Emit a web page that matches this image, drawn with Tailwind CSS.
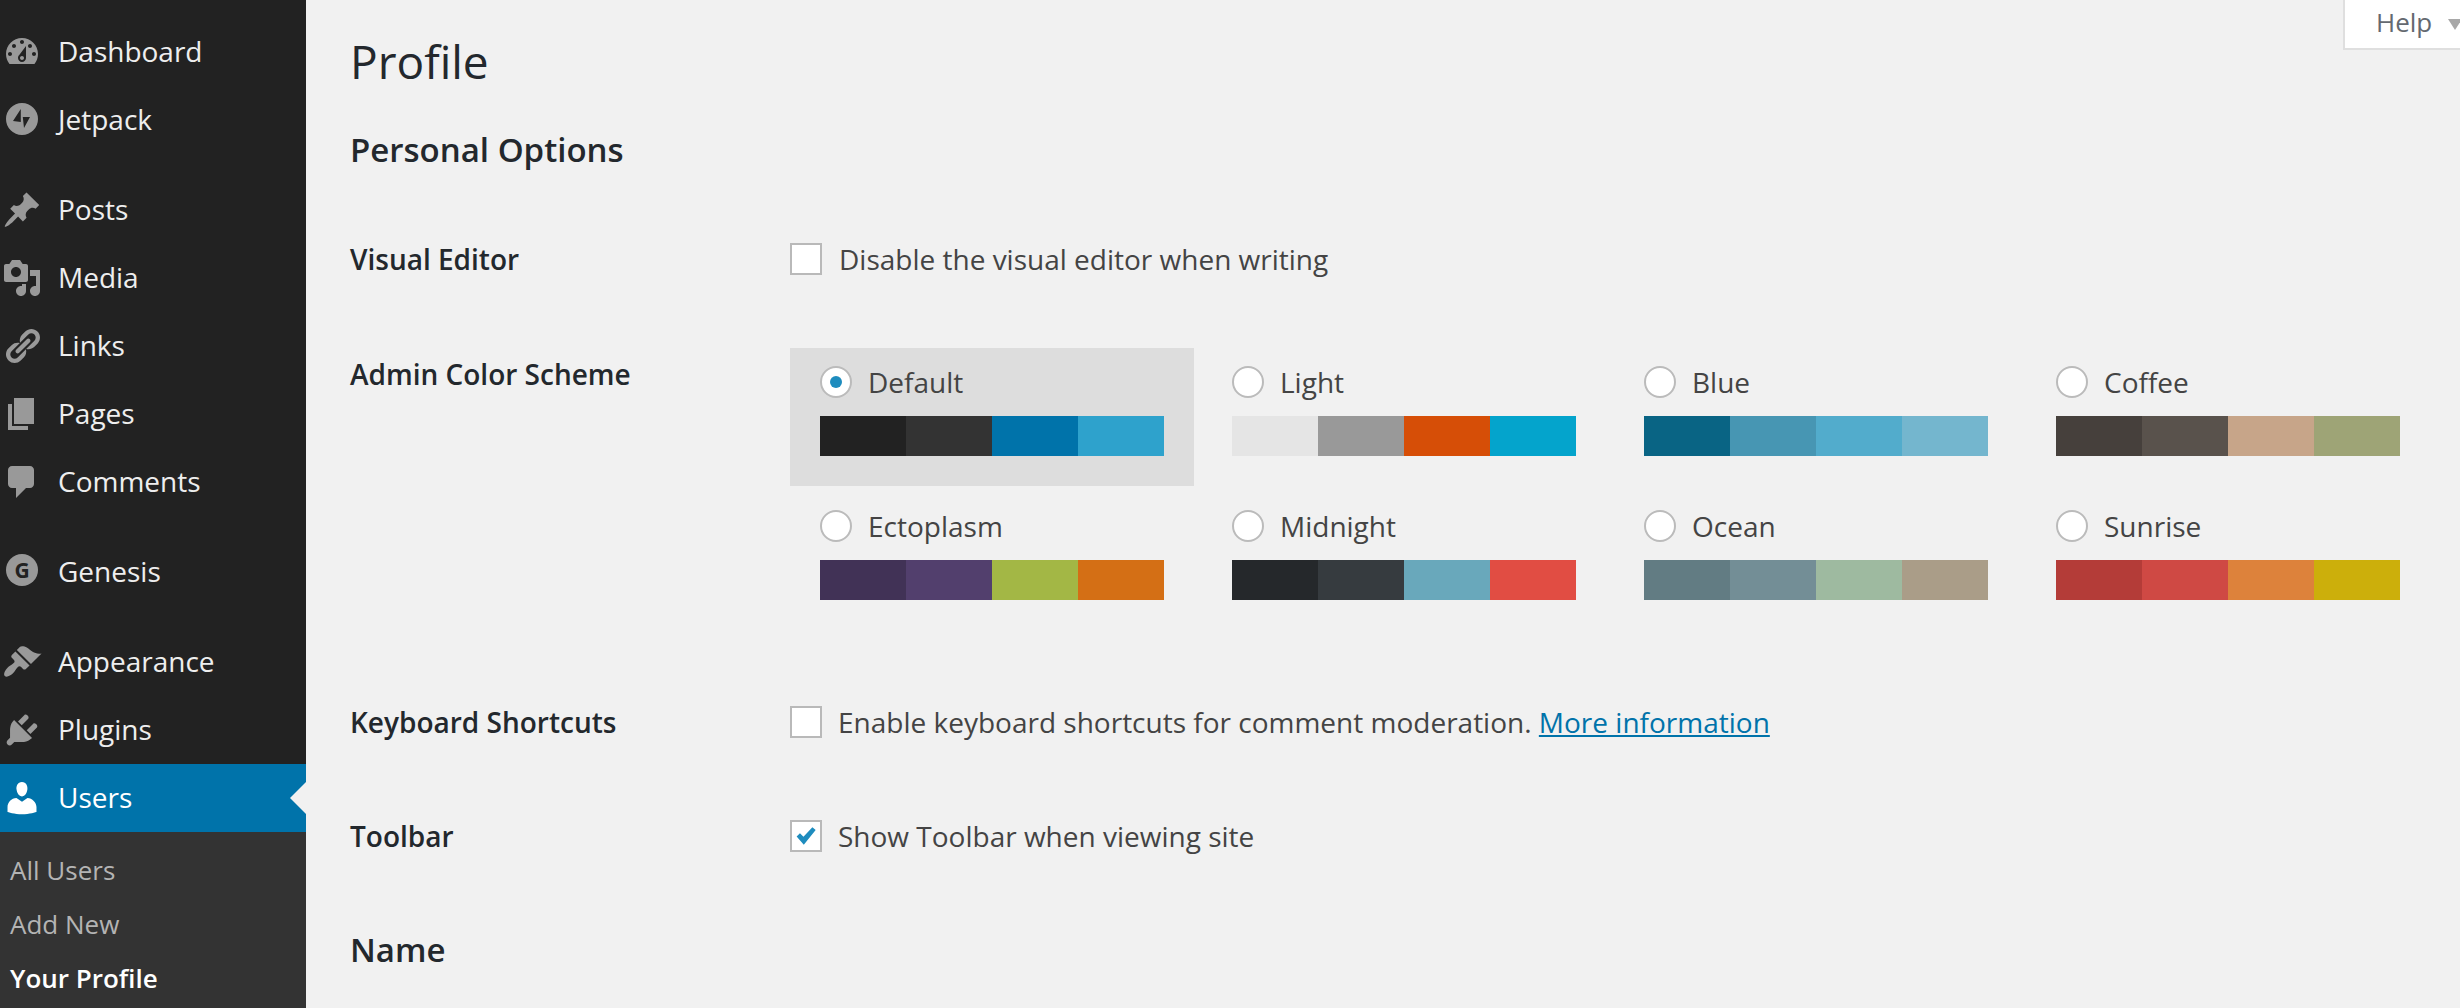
<!DOCTYPE html>
<html lang="en">
<head>
    <meta charset="UTF-8">
    <title>Profile</title>
    <script src="https://cdn.jsdelivr.net/npm/@tailwindcss/browser@4"></script>
</head>
<body class="h-[1008px] overflow-hidden bg-[#f1f1f1] font-['Open_Sans',sans-serif] text-[28px] text-[#444]">
<div class="flex h-[1008px]">
    <!-- Sidebar -->
    <nav class="w-[306px] shrink-0 bg-[#222] pt-[18px] text-[#eee]">
        <a class="flex h-[68px] items-center">
            <svg class="ml-[2px] h-10 w-10 fill-[#999]" viewBox="0 0 20 20"><path d="M3.76 16h12.48c1.1-1.37 1.76-3.11 1.76-5 0-4.42-3.58-8-8-8s-8 3.58-8 8c0 1.89.66 3.63 1.76 5zM10 4c.55 0 1 .45 1 1s-.45 1-1 1-1-.45-1-1 .45-1 1-1zM6 6c.55 0 1 .45 1 1s-.45 1-1 1-1-.45-1-1 .45-1 1-1zm8 0c.55 0 1 .45 1 1s-.45 1-1 1-1-.45-1-1 .45-1 1-1zm-5.37 5.55L12 7v6c0 1.1-.9 2-2 2s-2-.9-2-2c0-.57.24-1.08.63-1.45zM4 10c.55 0 1 .45 1 1s-.45 1-1 1-1-.45-1-1 .45-1 1-1zm12 0c.55 0 1 .45 1 1s-.45 1-1 1-1-.45-1-1 .45-1 1-1zm-5 3c0-.55-.45-1-1-1s-1 .45-1 1 .45 1 1 1 1-.45 1-1z" fill-rule="evenodd"/></svg>
            <span class="mb-[3px] ml-4">Dashboard</span>
        </a>
        <a class="flex h-[68px] items-center">
            <svg class="mb-[2px] ml-[2px] h-10 w-10 fill-[#999]" viewBox="0 0 20 20"><path fill-rule="evenodd" d="M10 2a8 8 0 1 0 0 16 8 8 0 0 0 0-16zM9.4 5L5.5 11l3.9.5zM10.4 9H14l-3 5.5z"/></svg>
            <span class="mb-[3px] ml-4">Jetpack</span>
        </a>
        <a class="mt-[22px] flex h-[68px] items-center">
            <svg class="ml-[2px] h-10 w-10 fill-[#999]" viewBox="0 0 20 20"><path d="M10.44 3.02l1.82-1.82 6.36 6.35-1.83 1.82c-1.05-.68-2.48-.57-3.41.36l-.75.75c-.92.93-1.04 2.35-.35 3.41l-1.83 1.82-2.41-2.41-2.8 2.79c-.42.42-3.38 2.71-3.8 2.29s1.86-3.39 2.28-3.81l2.79-2.79L4.1 9.36l1.83-1.82c1.05.69 2.48.57 3.4-.36l.75-.75c.93-.92 1.05-2.35.36-3.41z"/></svg>
            <span class="mb-[3px] ml-4">Posts</span>
        </a>
        <a class="flex h-[68px] items-center">
            <svg class="ml-[2px] h-10 w-10 fill-[#999]" viewBox="0 0 20 20"><path fill-rule="evenodd" d="M13 11V4c0-.55-.45-1-1-1h-1.67L9 1H5L3.67 3H2c-.55 0-1 .45-1 1v7c0 .55.45 1 1 1h10c.55 0 1-.45 1-1zM7 4.5c1.38 0 2.5 1.12 2.5 2.5S8.38 9.5 7 9.5 4.5 8.38 4.5 7 5.62 4.5 7 4.5zM14 6h5v10.5c0 1.38-1.12 2.5-2.5 2.5S14 17.88 14 16.5s1.12-2.5 2.5-2.5c.17 0 .34.02.5.05V9h-3V6zm-4 8.05V13h2v3.5c0 1.38-1.12 2.5-2.5 2.5S7 17.88 7 16.5 8.12 14 9.5 14c.17 0 .34.02.5.05z"/></svg>
            <span class="mb-[3px] ml-4">Media</span>
        </a>
        <a class="flex h-[68px] items-center">
            <svg class="ml-[2px] h-10 w-10 fill-[#999]" viewBox="0 0 20 20"><path d="M17.74 2.76c1.68 1.69 1.68 4.41 0 6.1l-1.53 1.52c-1.12 1.12-2.7 1.47-4.14 1.09l2.62-2.61.76-.77.76-.76c.84-.84.84-2.2 0-3.04-.84-.85-2.2-.85-3.04 0l-.77.76-3.38 3.38c-.37-1.44-.02-3.02 1.1-4.14l1.52-1.53c1.69-1.68 4.42-1.68 6.1 0zM8.59 13.43l5.34-5.34c.42-.42.42-1.1 0-1.52-.44-.43-1.13-.39-1.53 0l-5.33 5.34c-.42.42-.42 1.1 0 1.52.44.43 1.13.39 1.52 0zm-.76 2.29l4.14-4.15c.38 1.44.03 3.02-1.09 4.14l-1.52 1.53c-1.69 1.68-4.41 1.68-6.1 0-1.68-1.68-1.68-4.42 0-6.1l1.53-1.52c1.12-1.12 2.7-1.47 4.14-1.1l-4.14 4.15c-.85.84-.85 2.2 0 3.05.84.84 2.2.84 3.04 0z"/></svg>
            <span class="mb-[3px] ml-4">Links</span>
        </a>
        <a class="flex h-[68px] items-center">
            <svg class="ml-[2px] h-10 w-10 fill-[#999]" viewBox="0 0 20 20"><path d="M6 15V2h10v13H6zm-1 1h8v2H3V5h2v11z"/></svg>
            <span class="mb-[3px] ml-4">Pages</span>
        </a>
        <a class="flex h-[68px] items-center">
            <svg class="ml-[2px] h-10 w-10 fill-[#999]" viewBox="0 0 20 20"><path d="M5 2h9c1.1 0 2 .9 2 2v7c0 1.1-.9 2-2 2h-2l-5 5v-5H5c-1.1 0-2-.9-2-2V4c0-1.1.9-2 2-2z"/></svg>
            <span class="mb-[3px] ml-4">Comments</span>
        </a>
        <a class="mt-[22px] flex h-[68px] items-center">
            <span class="mb-[4px] ml-[6px] flex h-8 w-8 items-center justify-center rounded-full bg-[#999] text-[21px] leading-none font-bold text-[#222]">G</span>
            <span class="mb-[3px] ml-5">Genesis</span>
        </a>
        <a class="mt-[22px] flex h-[68px] items-center">
            <svg class="ml-[2px] h-10 w-10 fill-[#999]" viewBox="0 0 20 20"><path d="M14.48 11.06L7.41 3.99l1.5-1.5c.5-.56 2.3-.47 3.51.32 1.21.8 1.43 1.28 2.91 2.1 1.18.64 2.45 1.26 4.45.85zM13.77 11.77L6.7 4.7 4.93 6.47c-.39.39-.39 1.02 0 1.41l1.06 1.06c.39.39.39 1.03 0 1.42-.6.6-1.43 1.11-2.21 1.69-.35.26-.7.53-1.01.84C1.6 14.05.5 16.1 1.4 17c.9.9 2.95-.2 4.11-1.37.31-.31.58-.66.84-1.01.58-.78 1.09-1.61 1.69-2.21.39-.39 1.03-.39 1.42 0l1.06 1.06c.39.39 1.02.39 1.41 0z"/></svg>
            <span class="mb-[3px] ml-4">Appearance</span>
        </a>
        <a class="flex h-[68px] items-center">
            <svg class="ml-[2px] h-10 w-10 fill-[#999]" viewBox="0 0 20 20"><path d="M13.11 4.36L9.87 7.6 8 5.73l3.24-3.24c.35-.34 1.05-.2 1.56.32.52.51.66 1.21.31 1.55zm-8 1.77l.91-1.12 9.01 9.01-1.19.84c-.71.71-2.63 1.16-3.82 1.16H6.14L4.9 17.26c-.59.59-1.54.59-2.12 0-.59-.58-.59-1.53 0-2.12l1.24-1.24v-3.88c0-1.13.4-3.19 1.09-3.89zm7.26 3.97l3.24-3.24c.34-.35 1.04-.21 1.55.31.52.51.66 1.21.31 1.55l-3.24 3.25z"/></svg>
            <span class="mb-[3px] ml-4">Plugins</span>
        </a>
        <a class="relative flex h-[68px] items-center bg-[#0073aa] text-white">
            <svg class="ml-[2px] h-10 w-10 fill-white" viewBox="0 0 20 20"><path d="M10 9.25c-2.27 0-2.73-3.44-2.73-3.44C7 4.02 7.82 2 9.97 2c2.16 0 2.98 2.02 2.71 3.81 0 0-.41 3.44-2.68 3.44zm0 2.57L12.72 10c2.39 0 4.52 2.33 4.52 4.53v2.49s-3.65 1.13-7.24 1.13c-3.65 0-7.24-1.13-7.24-1.13v-2.49c0-2.25 1.94-4.48 4.47-4.48z"/></svg>
            <span class="mb-[3px] ml-4">Users</span>
            <span class="absolute top-[18px] right-0 h-0 w-0 border-y-[16px] border-r-[16px] border-y-transparent border-r-[#f1f1f1]"></span>
        </a>
        <div class="bg-[#333] pt-[13px] pb-4 text-[26px] text-[#b4b4b4]">
            <a class="flex h-[54px] items-center pb-[3px] pl-[10px]">All Users</a>
            <a class="flex h-[54px] items-center pb-[3px] pl-[10px]">Add New</a>
            <a class="flex h-[54px] items-center pb-[3px] pl-[10px] font-semibold text-white">Your Profile</a>
        </div>
    </nav>

    <!-- Content -->
    <main class="relative min-w-0 flex-1 pl-[44px]">
        <div class="absolute top-0 right-0 flex h-[50px] w-[117px] items-center border-b-2 border-l-2 border-[#dfdfdf] bg-white pl-[32px] text-[26px] text-[#646970]">
            <span class="mb-[3px] -ml-[1px]">Help</span>
            <span class="ml-4 h-0 w-0 border-x-[7px] border-t-[11px] border-x-transparent border-t-[#a8a8a8]"></span>
        </div>

        <h1 class="h-[88px] pt-[26px] text-[46px] leading-[70px] text-[#23282d]">Profile</h1>
        <h2 class="mt-[40px] text-[33px] leading-[44px] font-semibold text-[#23282d]">Personal Options</h2>

        <div class="mt-[71px] flex h-[32px] items-center">
            <div class="w-[440px] font-semibold text-[#23282d]">Visual Editor</div>
            <span class="h-8 w-8 border-2 border-[#b9b9b9] bg-white"></span>
            <span class="ml-[17px]">Disable the visual editor when writing</span>
        </div>

        <div class="mt-[73px] flex">
            <div class="w-[440px] shrink-0 pt-[6px] leading-[40px] font-semibold text-[#23282d]">Admin Color Scheme</div>
            <div class="grid grid-cols-[404px_404px_404px_404px] gap-x-2 gap-y-[6px]">
                <div class="h-[138px] bg-[#ddd] px-[30px] pt-[18px]">
                    <div class="flex h-8 items-center">
                        <span class="flex h-8 w-8 items-center justify-center rounded-full border-2 border-[#bbb] bg-white"><span class="h-3 w-3 rounded-full bg-[#1e8cbe]"></span></span>
                        <span class="ml-4">Default</span>
                    </div>
                    <div class="mt-[18px] flex h-10"><i class="flex-1 bg-[#222]"></i><i class="flex-1 bg-[#333]"></i><i class="flex-1 bg-[#0073aa]"></i><i class="flex-1 bg-[#2ea2cc]"></i></div>
                </div>
                <div class="h-[138px] px-[30px] pt-[18px]">
                    <div class="flex h-8 items-center">
                        <span class="h-8 w-8 rounded-full border-2 border-[#bbb] bg-white"></span>
                        <span class="ml-4">Light</span>
                    </div>
                    <div class="mt-[18px] flex h-10"><i class="flex-1 bg-[#e5e5e5]"></i><i class="flex-1 bg-[#999]"></i><i class="flex-1 bg-[#d64e07]"></i><i class="flex-1 bg-[#04a4cc]"></i></div>
                </div>
                <div class="h-[138px] px-[30px] pt-[18px]">
                    <div class="flex h-8 items-center">
                        <span class="h-8 w-8 rounded-full border-2 border-[#bbb] bg-white"></span>
                        <span class="ml-4">Blue</span>
                    </div>
                    <div class="mt-[18px] flex h-10"><i class="flex-1 bg-[#096484]"></i><i class="flex-1 bg-[#4796b3]"></i><i class="flex-1 bg-[#52accc]"></i><i class="flex-1 bg-[#74b6ce]"></i></div>
                </div>
                <div class="h-[138px] px-[30px] pt-[18px]">
                    <div class="flex h-8 items-center">
                        <span class="h-8 w-8 rounded-full border-2 border-[#bbb] bg-white"></span>
                        <span class="ml-4">Coffee</span>
                    </div>
                    <div class="mt-[18px] flex h-10"><i class="flex-1 bg-[#46403c]"></i><i class="flex-1 bg-[#59524c]"></i><i class="flex-1 bg-[#c7a589]"></i><i class="flex-1 bg-[#9ea476]"></i></div>
                </div>
                <div class="h-[138px] px-[30px] pt-[18px]">
                    <div class="flex h-8 items-center">
                        <span class="h-8 w-8 rounded-full border-2 border-[#bbb] bg-white"></span>
                        <span class="ml-4">Ectoplasm</span>
                    </div>
                    <div class="mt-[18px] flex h-10"><i class="flex-1 bg-[#413256]"></i><i class="flex-1 bg-[#523f6d]"></i><i class="flex-1 bg-[#a3b745]"></i><i class="flex-1 bg-[#d46f15]"></i></div>
                </div>
                <div class="h-[138px] px-[30px] pt-[18px]">
                    <div class="flex h-8 items-center">
                        <span class="h-8 w-8 rounded-full border-2 border-[#bbb] bg-white"></span>
                        <span class="ml-4">Midnight</span>
                    </div>
                    <div class="mt-[18px] flex h-10"><i class="flex-1 bg-[#25282b]"></i><i class="flex-1 bg-[#363b3f]"></i><i class="flex-1 bg-[#69a8bb]"></i><i class="flex-1 bg-[#e14d43]"></i></div>
                </div>
                <div class="h-[138px] px-[30px] pt-[18px]">
                    <div class="flex h-8 items-center">
                        <span class="h-8 w-8 rounded-full border-2 border-[#bbb] bg-white"></span>
                        <span class="ml-4">Ocean</span>
                    </div>
                    <div class="mt-[18px] flex h-10"><i class="flex-1 bg-[#627c83]"></i><i class="flex-1 bg-[#738e96]"></i><i class="flex-1 bg-[#9ebaa0]"></i><i class="flex-1 bg-[#aa9d88]"></i></div>
                </div>
                <div class="h-[138px] px-[30px] pt-[18px]">
                    <div class="flex h-8 items-center">
                        <span class="h-8 w-8 rounded-full border-2 border-[#bbb] bg-white"></span>
                        <span class="ml-4">Sunrise</span>
                    </div>
                    <div class="mt-[18px] flex h-10"><i class="flex-1 bg-[#b43c38]"></i><i class="flex-1 bg-[#cf4944]"></i><i class="flex-1 bg-[#dd823b]"></i><i class="flex-1 bg-[#ccaf0b]"></i></div>
                </div>
            </div>
        </div>

        <div class="mt-[76px] flex h-[32px] items-center">
            <div class="w-[440px] font-semibold text-[#23282d]">Keyboard Shortcuts</div>
            <span class="h-8 w-8 border-2 border-[#b9b9b9] bg-white"></span>
            <span class="ml-4">Enable keyboard shortcuts for comment moderation. <a class="text-[#0073aa] underline">More information</a></span>
        </div>

        <div class="mt-[82px] flex h-[32px] items-center">
            <div class="w-[440px] font-semibold text-[#23282d]">Toolbar</div>
            <span class="flex h-8 w-8 items-center justify-center border-2 border-[#b9b9b9] bg-white">
                <svg class="h-[22px] w-[22px] fill-[#1e8cbe]" viewBox="0 0 20 20"><path d="M1.5 10.5l3-3 3.2 3.1L15.8 2l3 2.6L8 18z"/></svg>
            </span>
            <span class="ml-4">Show Toolbar when viewing site</span>
        </div>

        <h2 class="mt-[76px] text-[33px] leading-[44px] font-semibold text-[#23282d]">Name</h2>
    </main>
</div>
</body>
</html>
